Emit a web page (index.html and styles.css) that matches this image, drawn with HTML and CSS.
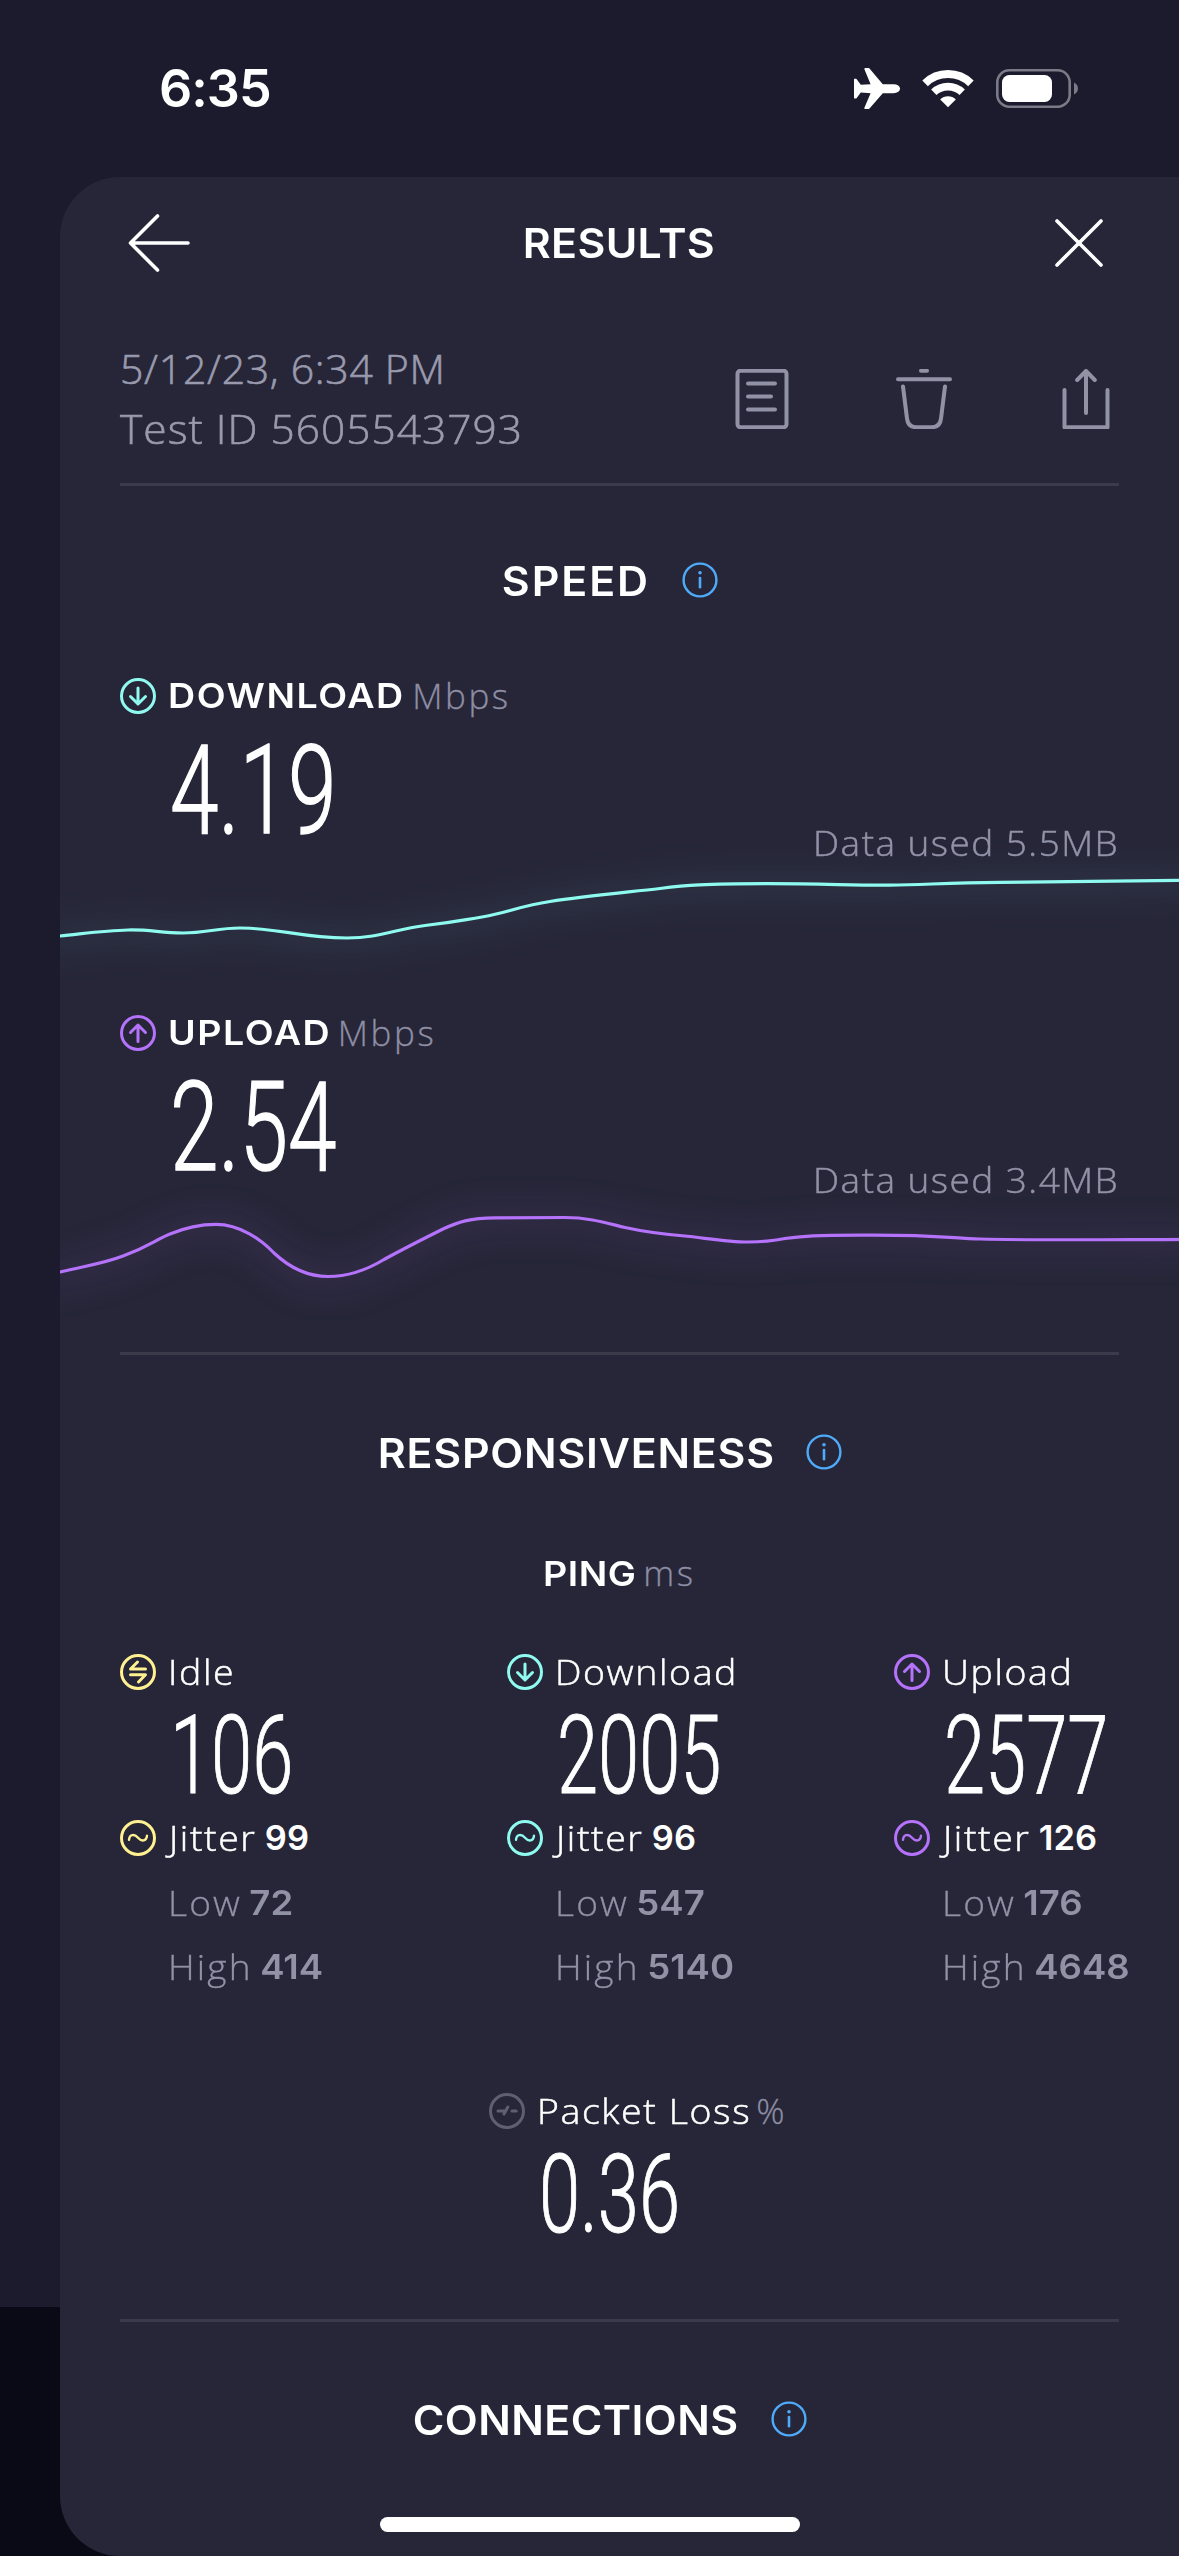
FILE: index.html
```html
<!DOCTYPE html>
<html lang="en">
<head>
    <meta charset="UTF-8">
    <meta name="viewport" content="width=device-width, initial-scale=1.0">
    <title>Speed Test Results</title>
    <link rel="stylesheet" href="styles.css">
</head>
<body>
    <!-- Shared icons -->
    <svg class="sprite" width="0" height="0">
        <symbol id="icon-info" viewBox="-18 -18 36 36">
            <circle r="16.4" stroke-width="2.4"/>
            <path d="M0-2V7.2" stroke-width="2.6"/>
            <circle class="dot" cy="-7.2" r="1.8"/>
        </symbol>
        <symbol id="icon-down" viewBox="-18 -18 36 36">
            <circle r="16.5"/>
            <path d="M0-8V8M-7.5.5L0 8 7.5.5"/>
        </symbol>
        <symbol id="icon-up" viewBox="-18 -18 36 36">
            <circle r="16.5"/>
            <path d="M0 8.5V-8M-7.5-.5L0-8 7.5-.5"/>
        </symbol>
        <symbol id="icon-idle" viewBox="-18 -18 36 36">
            <circle r="16.5"/>
            <path d="M7.5-3H-7.5L-.5-10M-7.5 2.8H7.5L.5 10"/>
        </symbol>
        <symbol id="icon-jitter" viewBox="-18 -18 36 36">
            <circle r="16.5"/>
            <path d="M-9 1.8C-8.500-4-3.500-4.200 0-.200S8.500 3.400 9-2.400" stroke-width="2.4"/>
        </symbol>
        <symbol id="icon-loss" viewBox="-18 -18 36 36">
            <circle r="16.5"/>
            <path d="M-9 0H-2.8M-3 3L.8-4M5 0H9.2"/>
        </symbol>
    </svg>

    <div class="phone">
        <div class="status-bar">
            <span class="time">6:35</span>
            <div class="status-icons">
                <svg width="46" height="42" viewBox="0 0 46 42">
                    <path fill="#fff" d="M39.500 16.200c8.700 0 8.700 9 0 9H28.800L15.500 40.500c-.4.500-.8.500-1.400.5h-2.600c-1 0-1.400-.6-1-1.500l6.100-14.300L6.800 24.600 2.700 30.100c-.3.500-.7.500-1.200.5H.8c-.6 0-.8-.4-.8-1V11.800c0-.6.200-1 .8-1h.7c.5 0 .9.100 1.200.5l4.100 5.500 9.800-.6L10.500 1.500C10.100.6 10.500 0 11.500 0h2.600c.6 0 1 .1 1.400.5l13.300 15.700z"/>
                </svg>
                <svg width="52" height="40" viewBox="-26 -38 52 40">
                    <path d="M-22.900-23.700A33 33 0 0 1 22.900-23.700" fill="none" stroke="#fff" stroke-width="8"/>
                    <path d="M-14.200-14.700A20.500 20.500 0 0 1 14.200-14.700" fill="none" stroke="#fff" stroke-width="7.600"/>
                    <path d="M0 .3L-7.800-7.600A11 11 0 0 1 7.800-7.600Z" fill="#fff"/>
                </svg>
                <svg width="82" height="39" viewBox="0 0 82 39">
                    <rect x="1.300" y="1.300" width="72.400" height="36.400" rx="12" fill="none" stroke="#7b7b88" stroke-width="2.600"/>
                    <rect x="6" y="6" width="50" height="27" rx="7.500" fill="#fff"/>
                    <path d="M78 13.500c5.300 2.500 5.300 9.500 0 12z" fill="#7b7b88"/>
                </svg>
            </div>
        </div>

        <div class="sheet">
            <div class="header">
                <svg class="back" width="62" height="58" viewBox="0 0 62 58">
                    <path d="M29.500 2L2.500 29 29.500 56M2.500 29H60"/>
                </svg>
                <h1>RESULTS</h1>
                <svg class="close" width="48" height="48" viewBox="0 0 48 48">
                    <path d="M2 2L46 46M46 2L2 46"/>
                </svg>
            </div>

            <div class="meta">
                <div class="meta-text">
                    <div class="date">5/12/23, 6:34 PM</div>
                    <div class="test-id">Test ID 5605543793</div>
                </div>
                <div class="actions">
                    <svg width="66" height="60" viewBox="-33 -30 66 60">
                        <rect x="-24.500" y="-28.300" width="49" height="56.600" rx="3"/>
                        <path d="M-14-15.500H13M-14-2.500H9M-14 10.500H13"/>
                    </svg>
                    <svg width="66" height="60" viewBox="-33 -30 66 60">
                        <path d="M-3-28.200H3M-26-19.800H26M-21-12.500L-17 19.500Q-16 28.200-8 28.200H8Q16 28.200 17 19.500L21-12.500"/>
                    </svg>
                    <svg width="66" height="60" viewBox="-33 -30 66 60">
                        <path d="M0 14V-28M-8.800-19L0-28 8.800-19M-21.500-9V28.300H21.500V-9"/>
                    </svg>
                </div>
            </div>

            <div class="section-title">
                <h2 class="title-speed">SPEED</h2>
                <svg class="icon info"><use href="#icon-info"/></svg>
            </div>

            <div class="speed">
                <div class="label">
                    <svg class="icon down"><use href="#icon-down"/></svg>
                    <strong class="caps download-caps">DOWNLOAD</strong><span class="unit">Mbps</span>
                </div>
                <div class="speed-row">
                    <span class="value">4.19</span>
                    <span class="data-used">Data used 5.5MB</span>
                </div>
                <svg class="graph down" viewBox="60 862 1119 151">
                    <path d="M40 938L60 936C85 933.500 105 930.500 128 930S160 933 183 933 217 928 240 928C280 928 300 938 347 938C380 938 395 929 425 925.500S460 920.500 482 917C510 912 520 906 550 901.500C585 896 625 892.500 660 888.500C685 885.500 705 883.700 765 883.600S850 885.500 890 885.200C925 885 945 882.600 1000 882.300S1100 880.900 1200 880.200"/>
                </svg>
            </div>

            <div class="speed">
                <div class="label">
                    <svg class="icon up"><use href="#icon-up"/></svg>
                    <strong class="caps upload-caps">UPLOAD</strong><span class="unit">Mbps</span>
                </div>
                <div class="speed-row">
                    <span class="value">2.54</span>
                    <span class="data-used">Data used 3.4MB</span>
                </div>
                <svg class="graph up" viewBox="60 1199 1119 151">
                    <path d="M40 1277L60 1272C90 1265 105 1263 123 1256C150 1246 155 1240 170 1234C190 1225.500 205 1224.300 216 1224.300C240 1224.300 262 1240 274 1253C290 1268 308 1276.500 328 1276.500C350 1276.500 370 1268 384 1259.500C405 1248 425 1238 443 1229C458 1222 470 1218 495 1217.800L565 1217.500C590 1217.500 608 1223.500 625 1227.500C645 1232 665 1234.500 690 1236.500C715 1239.500 730 1242 748 1242S775 1240.500 785 1238.500C805 1236 815 1235.200 860 1235.200C930 1234.500 950 1238 980 1239C1040 1240.500 1110 1239.500 1200 1239.300"/>
                </svg>
            </div>

            <div class="section-title with-border">
                <h2 class="title-responsiveness">RESPONSIVENESS</h2>
                <svg class="icon info"><use href="#icon-info"/></svg>
            </div>

            <div class="ping-title"><strong class="caps ping-caps">PING</strong><span class="unit">ms</span></div>

            <div class="ping-grid">
                <div class="ping">
                    <div class="label"><svg class="icon idle"><use href="#icon-idle"/></svg><span class="name">Idle</span></div>
                    <div class="value small">106</div>
                    <div class="label"><svg class="icon idle"><use href="#icon-jitter"/></svg><span class="name jitter">Jitter</span><b>99</b></div>
                    <div class="range first"><span>Low</span><b>72</b></div>
                    <div class="range"><span>High</span><b>414</b></div>
                </div>
                <div class="ping">
                    <div class="label"><svg class="icon down"><use href="#icon-down"/></svg><span class="name">Download</span></div>
                    <div class="value small">2005</div>
                    <div class="label"><svg class="icon down"><use href="#icon-jitter"/></svg><span class="name jitter">Jitter</span><b>96</b></div>
                    <div class="range first"><span>Low</span><b>547</b></div>
                    <div class="range"><span>High</span><b>5140</b></div>
                </div>
                <div class="ping">
                    <div class="label"><svg class="icon up"><use href="#icon-up"/></svg><span class="name">Upload</span></div>
                    <div class="value small">2577</div>
                    <div class="label"><svg class="icon up"><use href="#icon-jitter"/></svg><span class="name jitter">Jitter</span><b>126</b></div>
                    <div class="range first"><span>Low</span><b>176</b></div>
                    <div class="range"><span>High</span><b>4648</b></div>
                </div>
            </div>

            <div class="packet-loss">
                <div class="label"><svg class="icon loss"><use href="#icon-loss"/></svg><span class="name packet">Packet Loss</span><span class="unit">%</span></div>
                <div class="value small">0.36</div>
            </div>

            <div class="section-title with-border">
                <h2 class="title-connections">CONNECTIONS</h2>
                <svg class="icon info"><use href="#icon-info"/></svg>
            </div>
        </div>

        <div class="home-indicator"></div>
    </div>
</body>
</html>
```
FILE: styles.css
```css
* {
    box-sizing: border-box;
}

body {
    margin: 0;
    background-color: #1b1b2d;
    color: #fff;
    font-family: "Open Sans", sans-serif;
    font-weight: 300;
}

.sprite {
    position: absolute;
}

.phone {
    position: relative;
    width: 1179px;
    height: 2556px;
    overflow: hidden;
    background: linear-gradient(#1b1b2d 2307px, #0a0a16 2307px);
}

/* Status bar */
.status-bar {
    display: flex;
    justify-content: space-between;
    align-items: center;
    height: 177px;
    padding: 0 101px 0 159px;
}

.time {
    font-family: Inter, sans-serif;
    font-size: 52px;
    font-weight: 600;
    letter-spacing: -1px;
}

.status-icons {
    display: flex;
    align-items: center;
    gap: 22px;
}

/* Sheet */
.sheet {
    height: 2379px;
    margin-left: 60px;
    padding: 0 60px;
    overflow: hidden;
    background-color: #262638;
    border-radius: 60px 0 0 60px;
}

.header {
    display: grid;
    grid-template-columns: 1fr auto 1fr;
    align-items: center;
    height: 132px;
    padding: 0 16px 0 8px;
}

.header svg {
    fill: none;
    stroke: #fff;
    stroke-width: 3.6;
    stroke-linecap: round;
    stroke-linejoin: round;
}

.close {
    justify-self: end;
}

/* Wide headings */
h1,
h2 {
    margin: 0;
    padding-top: 2px;
    font-family: Inter, sans-serif;
    font-size: 40.500px;
    font-weight: 600;
    line-height: 60px;
    transform: scaleX(1.060);
}

h1 {
    padding-left: 7px;
    letter-spacing: 0.300px;
}

.meta {
    display: flex;
    justify-content: space-between;
    height: 177px;
    padding-top: 29px;
    border-bottom: 3px solid #3a3a4b;
    color: #9a9aae;
    font-size: 41px;
    line-height: 60px;
    -webkit-text-stroke: 0.600px #9a9aae;
}

.date {
    letter-spacing: 0.700px;
}

.test-id {
    letter-spacing: 1px;
    transform: scaleX(1.035);
    transform-origin: left;
}

.actions {
    display: flex;
    align-items: center;
    gap: 96px;
    height: 122px;
}

.actions svg {
    fill: none;
    stroke: #9292a7;
    stroke-width: 4;
    stroke-linecap: round;
    stroke-linejoin: round;
}

.section-title {
    display: flex;
    justify-content: center;
    align-items: center;
    gap: 32px;
    height: 190px;
    padding-right: 19px;
}

.section-title.with-border {
    height: 199px;
    border-top: 3px solid #3a3a4b;
}

.title-speed {
    padding-right: 4px;
    padding-left: 4px;
    letter-spacing: 1.800px;
}

.title-responsiveness {
    padding-right: 11px;
    padding-left: 11px;
    letter-spacing: 0.700px;
}

.title-connections {
    padding-right: 9px;
    padding-left: 9px;
    letter-spacing: 0.400px;
}

/* Icons */
.icon {
    flex: none;
    width: 36px;
    height: 36px;
    fill: none;
    stroke: currentColor;
    stroke-width: 3;
    stroke-linecap: round;
    stroke-linejoin: round;
}

.info {
    margin-top: -3px;
    color: #4fabfa;
}

.dot {
    fill: currentColor;
    stroke: none;
}

.down {
    color: #8ffbf0;
}

.up {
    color: #b572fb;
}

.idle {
    color: #fff090;
}

.loss {
    color: #5f5f73;
}

/* Labels and values */
.label {
    display: flex;
    align-items: center;
    height: 40px;
    font-size: 35px;
    line-height: 40px;
    letter-spacing: 1.500px;
    white-space: nowrap;
}

.label .icon {
    margin-right: 12px;
}

.name {
    margin-right: 7px;
    -webkit-text-stroke: 0.500px #fff;
    transform: scaleX(1.070);
    transform-origin: left;
}

.name.packet {
    margin-right: 14px;
}

.caps {
    display: inline-block;
    font-family: Inter, sans-serif;
    font-weight: 600;
    font-size: 34.500px;
    letter-spacing: 1.400px;
    transform: scaleX(1.090);
    transform-origin: left;
}

.download-caps {
    margin-right: 22px;
}

.upload-caps {
    margin-right: 15px;
}

.ping-caps {
    margin-right: 9px;
    letter-spacing: 0.500px;
}

.unit {
    margin-left: 5px;
    color: #8e8ea4;
    letter-spacing: 2.600px;
    -webkit-text-stroke: 0.300px #8e8ea4;
}

.value {
    padding-left: 50px;
    font-family: Roboto, sans-serif;
    font-size: 125px;
    font-weight: 300;
    line-height: 146px;
    -webkit-text-stroke: 1.400px #fff;
    transform: translateY(2px) scaleX(0.700);
    transform-origin: 50px 50%;
}

.value.small {
    font-size: 109px;
    line-height: 126px;
    -webkit-text-stroke-width: 1px;
    transform: translateY(1px) scaleX(0.680);
}

.speed {
    height: 337px;
}

.speed + .section-title {
    margin-top: 2px;
}

.speed-row {
    display: flex;
    justify-content: space-between;
    height: 146px;
}

.data-used {
    padding-top: 107px;
    color: #9292a7;
    font-size: 35px;
    line-height: 40px;
    letter-spacing: 1.400px;
    -webkit-text-stroke: 0.500px #9292a7;
    transform: scaleX(1.055);
    transform-origin: right;
}

.graph {
    display: block;
    width: 1119px;
    height: 151px;
    margin-left: -60px;
    overflow: visible;
    fill: none;
    stroke: currentColor;
    stroke-width: 3.2;
}

.graph.down {
    filter: drop-shadow(0 2px 18px rgba(143, 251, 240, 0.550));
}

.graph.up {
    filter: drop-shadow(0 2px 18px rgba(181, 114, 251, 0.700));
}

/* Ping */
.ping-title {
    height: 43px;
    margin-bottom: 58px;
    font-size: 35px;
    line-height: 43px;
    text-align: center;
}

.ping-grid {
    display: grid;
    grid-template-columns: repeat(3, 387px);
    height: 346px;
}

b {
    margin-left: 7px;
    font-family: Inter, sans-serif;
    font-size: 34.500px;
    font-weight: 600;
    letter-spacing: 0;
}

.jitter {
    margin-left: 1px;
}

.range {
    display: flex;
    align-items: center;
    height: 64px;
    padding-left: 48px;
    color: #9292a7;
    font-size: 35px;
    letter-spacing: 2px;
    transform: scaleX(1.060);
    transform-origin: 48px 50%;
}

.range span {
    -webkit-text-stroke: 0.300px #9292a7;
}

.range.first {
    margin-top: 12px;
}

.packet-loss {
    height: 321px;
    padding: 93px 0 0 369px;
}

.home-indicator {
    position: absolute;
    left: 380px;
    bottom: 24px;
    width: 420px;
    height: 15px;
    border-radius: 8px;
    background-color: #fff;
}
```
